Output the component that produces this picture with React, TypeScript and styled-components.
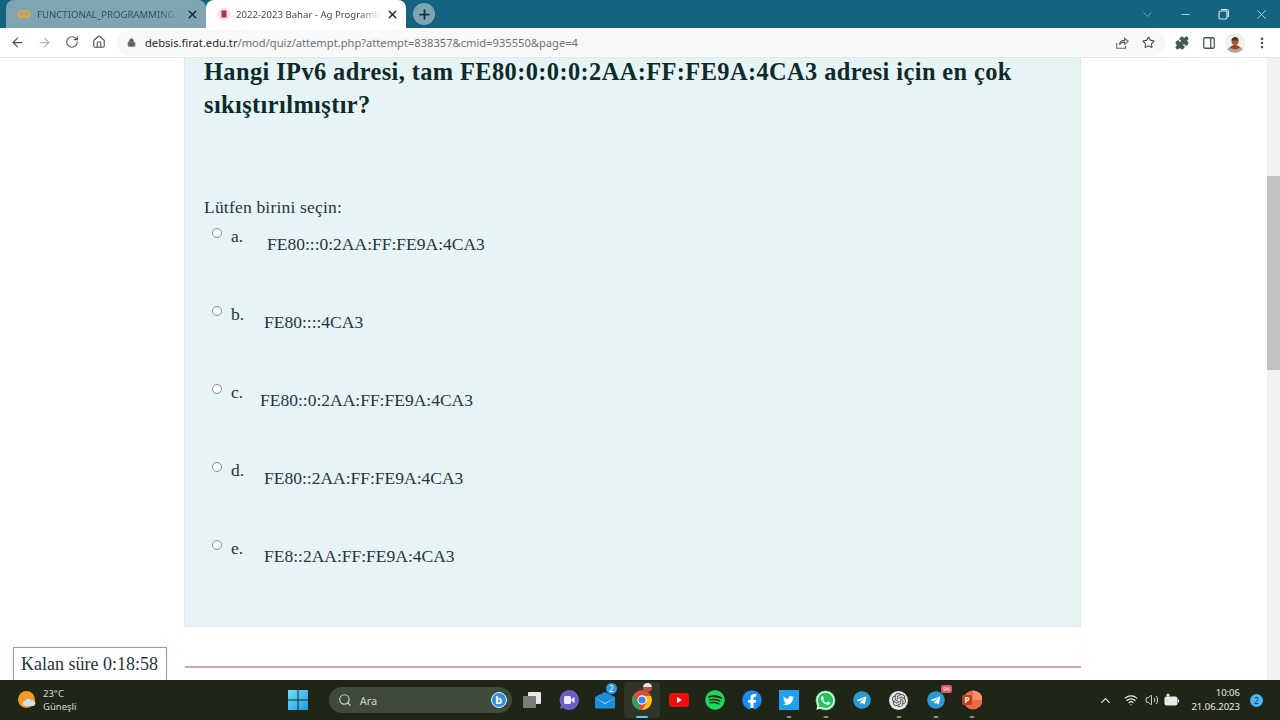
import React from 'react';
import styled, { createGlobalStyle } from 'styled-components';
import {
  ArrowLeft,
  ArrowRight,
  ChevronDown,
  ChevronUp,
  Home,
  Lock,
  Minus,
  MoreVertical,
  PanelRight,
  Plus,
  Puzzle,
  RotateCw,
  Search,
  Star,
  Volume2,
  Wifi,
  X,
} from 'lucide-react';
import { FaFacebook, FaSpotify, FaTelegram, FaTwitter, FaWhatsapp } from 'react-icons/fa';
import { SiOpenai } from 'react-icons/si';

const GlobalStyle = createGlobalStyle`
  html, body {
    margin: 0;
    height: 100%;
    overflow: hidden;
    background: #fff;
  }
`;

const Shell = styled.div`
  width: 1280px;
  height: 720px;
  display: flex;
  flex-direction: column;
  overflow: hidden;
  font-family: 'Noto Sans', 'Open Sans', sans-serif;
`;

const TabStrip = styled.div`
  height: 28px;
  flex: none;
  background: #14637f;
  display: flex;
  align-items: flex-end;
  padding-left: 6px;
`;

const Tab = styled.div<{ $active?: boolean }>`
  width: 200px;
  height: 28px;
  box-sizing: border-box;
  border-radius: 8px 8px 0 0;
  background: ${(p) => (p.$active ? '#fff' : '#7fa5b3')};
  color: ${(p) => (p.$active ? '#45494d' : '#34505c')};
  display: flex;
  align-items: center;
  padding: 0 7px 0 11px;
  font-size: 9.6px;
  gap: 5px;
  white-space: nowrap;
  svg {
    flex: none;
  }
  svg.close {
    color: #17262c;
  }
`;

const TabTitle = styled.span<{ $gap: number }>`
  flex: 1;
  min-width: 0;
  margin-left: ${(p) => p.$gap}px;
  -webkit-mask-image: linear-gradient(90deg, #000 85%, transparent);
  mask-image: linear-gradient(90deg, #000 85%, transparent);
`;

const NewTab = styled.div`
  width: 22px;
  height: 22px;
  border-radius: 50%;
  background: #7fa5b3;
  color: #12303c;
  margin: 0 0 3px 7px;
  display: flex;
  align-items: center;
  justify-content: center;
`;

const WindowControls = styled.div`
  margin-left: auto;
  height: 28px;
  display: flex;
  align-items: center;
  color: #d8e6ec;
`;

const WindowButton = styled.div`
  width: 38px;
  display: flex;
  justify-content: center;
`;

const Toolbar = styled.div`
  height: 30px;
  flex: none;
  background: #fff;
  border-bottom: 1px solid #e3e5e6;
  box-sizing: border-box;
  display: flex;
  align-items: center;
  color: #5c6166;
`;

const NavButton = styled.div<{ $muted?: boolean }>`
  width: 27px;
  display: flex;
  justify-content: center;
  color: ${(p) => (p.$muted ? '#b3b7ba' : '#50555a')};
  flex: none;
`;

const NavGroup = styled.div`
  display: flex;
  padding-left: 4px;
  width: 117px;
  box-sizing: border-box;
  flex: none;
`;

const AddressBar = styled.div`
  width: 1048px;
  height: 26px;
  border-radius: 13px;
  background: #f7f8f8;
  display: flex;
  align-items: center;
  padding: 0 10px;
  box-sizing: border-box;
  flex: none;
  font-size: 11.15px;
  color: #6d7276;
`;

const Host = styled.span`
  color: #24282b;
`;

const Url = styled.span`
  margin-left: 9px;
  flex: 1;
  white-space: nowrap;
`;

const ToolIcons = styled.div`
  display: flex;
  align-items: center;
  flex: none;
  margin-left: 3px;
`;

const AvatarFrame = styled.div`
  width: 20px;
  height: 20px;
  margin: 0 3px;
  border-radius: 50%;
  overflow: hidden;
  background: #f2efec;
`;

const Viewport = styled.div`
  flex: 1;
  min-height: 0;
  display: flex;
`;

const Page = styled.main`
  flex: 1;
  min-width: 0;
  overflow: hidden;
  font-family: 'Liberation Serif', 'DejaVu Serif', serif;
  color: #1d2125;
`;

const QuestionCard = styled.section`
  display: flow-root;
  margin-left: 184px;
  width: 897px;
  height: 569px;
  box-sizing: border-box;
  background: #e7f4f6;
  border: 1px solid #d9ecf0;
  border-top: 0;
  padding: 0 19px;
`;

const QuestionText = styled.h2`
  margin: -3px 0 0;
  font-size: 24.4px;
  letter-spacing: 0.4px;
  line-height: 33px;
  font-weight: 700;
  color: #0f2a2a;
`;

const Prompt = styled.p`
  margin: 74px 0 0;
  font-size: 17.5px;
  letter-spacing: 0.2px;
  line-height: 24px;
  color: #29333a;
`;

const OptionList = styled.div`
  display: flex;
  flex-direction: column;
  margin-top: 6px;
`;

const OptionRow = styled.label`
  height: 78px;
  display: flex;
  align-items: flex-start;
  padding-left: 8px;
  font-size: 17.5px;
  color: #29333a;
`;

const Radio = styled.span`
  width: 10px;
  height: 10px;
  margin-top: 3px;
  flex: none;
  box-sizing: border-box;
  border: 1px solid #8a8a8a;
  border-radius: 50%;
  background: #fff;
`;

const OptionLetter = styled.span`
  margin: 2px 0 0 9px;
  line-height: 18px;
`;

const OptionText = styled.span<{ $left: number }>`
  position: absolute;
  left: ${(p) => p.$left}px;
  margin-top: 7px;
  line-height: 24px;
`;

const TimerRow = styled.div`
  display: flex;
  align-items: center;
  margin: 20px 0 0 13px;
`;

const TimerBox = styled.div`
  width: 154px;
  height: 40px;
  box-sizing: border-box;
  border: 1px solid #d0808f;
  padding: 3px 0 0 7px;
  font-size: 18px;
  line-height: 26px;
  color: #29333a;
  white-space: nowrap;
`;

const TimerRule = styled.div`
  margin: -1px 0 0 18px;
  width: 896px;
  height: 2px;
  background: #dba3b0;
`;

const ScrollTrack = styled.div`
  width: 13px;
  flex: none;
  background: #f1f1f1;
  position: relative;
`;

const ScrollThumb = styled.div`
  position: absolute;
  top: 118px;
  left: 0;
  width: 13px;
  height: 194px;
  background: #c1c1c1;
`;

const Taskbar = styled.footer`
  height: 40px;
  flex: none;
  background: #1f2618;
  display: flex;
  align-items: center;
  color: #e7e9e4;
`;

const Weather = styled.div`
  width: 280px;
  flex: none;
  display: flex;
  align-items: center;
  padding-left: 18px;
  box-sizing: border-box;
  gap: 7px;
  font-size: 9.5px;
  line-height: 13px;
`;

const WeatherText = styled.div`
  color: #d9dcd5;
`;

const Slot = styled.div<{ $active?: boolean; $open?: boolean }>`
  width: 36.7px;
  height: 36px;
  flex: none;
  display: flex;
  align-items: center;
  justify-content: center;
  position: relative;
  border-radius: 4px;
  background: ${(p) => (p.$active ? '#2f3629' : 'transparent')};
  &::after {
    content: '';
    display: ${(p) => (p.$open || p.$active ? 'block' : 'none')};
    position: absolute;
    bottom: 0;
    left: 50%;
    transform: translateX(-50%);
    width: ${(p) => (p.$active ? 12 : 5)}px;
    height: 2px;
    border-radius: 1px;
    background: ${(p) => (p.$active ? '#5fc5f5' : '#8b8f87')};
  }
`;

const SearchPill = styled.div`
  width: 183px;
  height: 26px;
  margin: 0 2px 0 12px;
  flex: none;
  border-radius: 13px;
  background: #3f4a39;
  display: flex;
  align-items: center;
  padding: 0 5px 0 9px;
  box-sizing: border-box;
  font-size: 11px;
  color: #cfd3cb;
  gap: 8px;
`;

const BingBadge = styled.div`
  margin-left: auto;
  width: 16px;
  height: 16px;
  border-radius: 50%;
  background: #2f8fe0;
  border: 1px solid #e8f3fb;
  box-sizing: border-box;
  color: #fff;
  font-weight: 700;
  font-size: 11px;
  line-height: 13px;
  text-align: center;
`;

const CountBadge = styled.span<{ $red?: boolean }>`
  position: absolute;
  top: ${(p) => (p.$red ? 3 : 1)}px;
  right: ${(p) => (p.$red ? 2 : 7)}px;
  min-width: 11px;
  height: ${(p) => (p.$red ? 8 : 11)}px;
  border-radius: ${(p) => (p.$red ? 2 : 6)}px;
  background: ${(p) => (p.$red ? '#e5555f' : '#2b9ae0')};
  color: #fff;
  font-size: ${(p) => (p.$red ? 6 : 8)}px;
  line-height: ${(p) => (p.$red ? 8 : 11)}px;
  text-align: center;
`;

const ProfileDot = styled.span`
  position: absolute;
  top: 1px;
  right: 8px;
  width: 9px;
  height: 9px;
  border-radius: 50%;
  background: linear-gradient(180deg, #f0e6dc 0 40%, #b5573c 40%);
`;

const WhiteCore = styled.span`
  display: flex;
  border-radius: 50%;
  background: radial-gradient(circle, #fff 0 55%, transparent 58%);
`;

const WhatsappCore = styled(WhiteCore)`
  background: radial-gradient(circle, #25c35f 0 66%, transparent 69%);
`;

const TwitterTile = styled.span`
  width: 20px;
  height: 20px;
  background: #1da1f2;
  display: flex;
  align-items: center;
  justify-content: center;
`;

const OpenAiDisc = styled.span`
  width: 19px;
  height: 19px;
  border-radius: 50%;
  background: #e6e6e6;
  display: flex;
  align-items: center;
  justify-content: center;
`;

const Tray = styled.div`
  margin-left: auto;
  display: flex;
  align-items: center;
  color: #e8eae5;
`;

const TrayIcon = styled.div<{ $w: number }>`
  width: ${(p) => p.$w}px;
  display: flex;
  justify-content: center;
`;

const Clock = styled.div`
  width: 52px;
  margin-left: 6px;
  text-align: right;
  font-size: 9.5px;
  line-height: 14px;
  white-space: nowrap;
`;

const NotifyBadge = styled.div`
  width: 13px;
  height: 13px;
  margin: 0 17px 0 10px;
  border-radius: 50%;
  background: #4fb3f0;
  color: #12303c;
  font-size: 8px;
  line-height: 13px;
  text-align: center;
`;

const options = [
  { letter: 'a.', text: 'FE80:::0:2AA:FF:FE9A:4CA3', left: 267 },
  { letter: 'b.', text: 'FE80::::4CA3', left: 264 },
  { letter: 'c.', text: 'FE80::0:2AA:FF:FE9A:4CA3', left: 260 },
  { letter: 'd.', text: 'FE80::2AA:FF:FE9A:4CA3', left: 264 },
  { letter: 'e.', text: 'FE8::2AA:FF:FE9A:4CA3', left: 264 },
];

const WinLogo = () => (
  <svg width="20" height="20" viewBox="0 0 20 20">
    <defs>
      <linearGradient id="win" x1="0" y1="0" x2="1" y2="1">
        <stop offset="0" stopColor="#6fdcfb" />
        <stop offset="1" stopColor="#1a9fe8" />
      </linearGradient>
    </defs>
    <path fill="url(#win)" d="M0 0h9.500v9.500H0zM10.500 0H20v9.500h-9.500zM0 10.500h9.500V20H0zM10.500 10.500H20V20h-9.500z" />
  </svg>
);

const ChromeLogo = () => (
  <svg width="20" height="20" viewBox="0 0 20 20">
    <circle cx="10" cy="10" r="10" fill="#e5483c" />
    <path d="M10 20A10 10 0 0 1 1.300 5L6 12.500l3 7.500z" fill="#2ea550" />
    <path d="M10 6h9a10 10 0 0 1-9 14l4.500-7z" fill="#f9c515" />
    <circle cx="10" cy="10" r="4.700" fill="#fff" />
    <circle cx="10" cy="10" r="3.600" fill="#3c84e8" />
  </svg>
);

const WeatherIcon = () => (
  <svg width="18" height="18" viewBox="0 0 18 18">
    <circle cx="8.500" cy="8.500" r="8.500" fill="#f39a1f" />
    <path d="M7 15a2.500 2.500 0 0 1 .3-5 3 3 0 0 1 5.700-.5A2.800 2.800 0 0 1 15.500 15z" fill="#cfe0f2" />
  </svg>
);

const TaskViewIcon = () => (
  <svg width="20" height="18" viewBox="0 0 20 18">
    <rect x="6" y="1" width="13" height="12" rx="1" fill="#e6e6e6" />
    <rect x="1" y="5" width="13" height="12" rx="1" fill="#7b7b7b" />
  </svg>
);

const MeetIcon = () => (
  <svg width="20" height="20" viewBox="0 0 20 20">
    <path d="M10 0a10 10 0 1 1-6 18l-3 1 1-4A10 10 0 0 1 10 0z" fill="#6b5fc4" />
    <rect x="5" y="6" width="7" height="8" rx="1.500" fill="#f1effa" />
    <path d="M12.500 9l3-2v6l-3-2z" fill="#f1effa" />
  </svg>
);

const MailIcon = () => (
  <svg width="22" height="18" viewBox="0 0 22 18">
    <path d="M1 6l10-5 10 5v10a1.500 1.500 0 0 1-1.500 1.500h-17A1.500 1.500 0 0 1 1 16z" fill="#1c8fdc" />
    <path d="M1 7l10 5 10-5-10 6z" fill="#bfe6fb" />
  </svg>
);

const YoutubeIcon = () => (
  <svg width="20" height="14" viewBox="0 0 20 14">
    <rect width="20" height="14" rx="3" fill="#f00d0d" />
    <path d="M8 4l5 3-5 3z" fill="#fff" />
  </svg>
);

const PowerPointIcon = () => (
  <svg width="20" height="20" viewBox="0 0 20 20">
    <circle cx="11" cy="10" r="9.500" fill="#ed6c47" />
    <path d="M11 .5a9.500 9.500 0 0 1 9.500 9.500H11z" fill="#ff8f6b" />
    <rect x="0" y="5" width="10" height="10" rx="1.500" fill="#c43e1c" />
    <text x="5" y="13" fontSize="8" fontWeight="700" fill="#fff" textAnchor="middle" fontFamily="Noto Sans, sans-serif">
      P
    </text>
  </svg>
);

const BatteryIcon = () => (
  <svg width="16" height="14" viewBox="0 0 16 14" fill="none" stroke="#e8eae5" strokeWidth="1.100">
    <rect x="1" y="4" width="12" height="8" rx="1.500" fill="#e8eae5" />
    <path d="M14.500 6.500v3" />
    <path d="M4 4V1.500M2.500 2.500L4 1l1.500 1.500" />
  </svg>
);

const ShareIcon = () => (
  <svg width="14" height="14" viewBox="0 0 16 16" fill="none" stroke="#5c6166" strokeWidth="1.200" style={{ marginRight: 13 }}>
    <path d="M2 8v6h10v-3" />
    <path d="M5 10c.5-3.500 3-5 6-5V2.500L15 6l-4 3.500V7c-2.500 0-4.500 1-6 3z" />
  </svg>
);

const RestoreIcon = () => (
  <svg width="11" height="11" viewBox="0 0 11 11" fill="none" stroke="#d8e6ec" strokeWidth="1.200">
    <rect x="1" y="2" width="8" height="8" rx="1.500" />
    <path d="M3 .7h5.500a2 2 0 0 1 2 2V8" />
  </svg>
);

const AvatarImage = () => (
  <svg width="20" height="20" viewBox="0 0 20 20">
    <path d="M1 20c0-5 4-7 9-7s9 2 9 7z" fill="#b9a793" />
    <path d="M5 15c1-2 2-3 5-3s4 1 5 3l-5 1.500z" fill="#9c3f2a" />
    <circle cx="10" cy="8.500" r="3.500" fill="#a3593c" />
    <path d="M6.500 7.500c0-2 1.500-3.500 3.500-3.500s3.500 1.500 3.500 3.500z" fill="#4a3528" />
  </svg>
);

export default function App() {
  return (
    <>
      <GlobalStyle />
      <Shell>
        <TabStrip>
          <Tab>
            <svg width="14" height="14" viewBox="0 0 14 14" fill="none" stroke="#e8a33a" strokeWidth="2">
              <circle cx="4.500" cy="7" r="3" />
              <circle cx="9.500" cy="7" r="3" />
            </svg>
            <TabTitle $gap={1}>FUNCTIONAL_PROGRAMMING.ip</TabTitle>
            <X className="close" size={13} strokeWidth={2.5} />
          </Tab>
          <Tab $active>
            <svg width="14" height="14" viewBox="0 0 14 14">
              <circle cx="7" cy="7" r="6.500" fill="#f5dfe4" />
              <rect x="4.500" y="3.500" width="5" height="7" fill="#9b3a52" />
            </svg>
            <TabTitle $gap={0}>2022-2023 Bahar - Ag Programla</TabTitle>
            <X className="close" size={13} strokeWidth={2.5} />
          </Tab>
          <NewTab>
            <Plus size={15} strokeWidth={2.8} />
          </NewTab>
          <WindowControls>
            <WindowButton>
              <ChevronDown size={15} strokeWidth={1.3} color="#8fb4c4" />
            </WindowButton>
            <WindowButton>
              <Minus size={13} strokeWidth={1.5} />
            </WindowButton>
            <WindowButton>
              <RestoreIcon />
            </WindowButton>
            <WindowButton>
              <X size={15} strokeWidth={1.3} />
            </WindowButton>
          </WindowControls>
        </TabStrip>

        <Toolbar>
          <NavGroup>
            <NavButton>
              <ArrowLeft size={15} strokeWidth={2} />
            </NavButton>
            <NavButton $muted>
              <ArrowRight size={15} strokeWidth={2} />
            </NavButton>
            <NavButton>
              <RotateCw size={14} strokeWidth={2} />
            </NavButton>
            <NavButton>
              <Home size={14} strokeWidth={2} />
            </NavButton>
          </NavGroup>
          <AddressBar>
            <Lock size={9} fill="#5c6166" strokeWidth={2.5} />
            <Url>
              <Host>debsis.firat.edu.tr</Host>/mod/quiz/attempt.php?attempt=838357&amp;cmid=935550&amp;page=4
            </Url>
            <ShareIcon />
            <Star size={13} strokeWidth={2} color="#45494d" />
          </AddressBar>
          <ToolIcons>
            <NavButton>
              <Puzzle size={14} fill="#45595c" color="#45595c" />
            </NavButton>
            <NavButton>
              <PanelRight size={14} strokeWidth={2.2} color="#45595c" />
            </NavButton>
            <AvatarFrame>
              <AvatarImage />
            </AvatarFrame>
            <NavButton>
              <MoreVertical size={14} strokeWidth={2.5} color="#45595c" />
            </NavButton>
          </ToolIcons>
        </Toolbar>

        <Viewport>
          <Page>
            <QuestionCard>
              <QuestionText>
                Hangi IPv6 adresi, tam FE80:0:0:0:2AA:FF:FE9A:4CA3 adresi için en çok sıkıştırılmıştır?
              </QuestionText>
              <Prompt>Lütfen birini seçin:</Prompt>
              <OptionList>
                {options.map((o) => (
                  <OptionRow key={o.letter}>
                    <Radio />
                    <OptionLetter>{o.letter}</OptionLetter>
                    <OptionText $left={o.left}>{o.text}</OptionText>
                  </OptionRow>
                ))}
              </OptionList>
            </QuestionCard>
            <TimerRow>
              <TimerBox>Kalan süre 0:18:58</TimerBox>
              <TimerRule />
            </TimerRow>
          </Page>
          <ScrollTrack>
            <ScrollThumb />
          </ScrollTrack>
        </Viewport>

        <Taskbar>
          <Weather>
            <WeatherIcon />
            <WeatherText>
              23°C
              <br />
              Güneşli
            </WeatherText>
          </Weather>
          <Slot>
            <WinLogo />
          </Slot>
          <SearchPill>
            <Search size={14} strokeWidth={2} />
            Ara
            <BingBadge>b</BingBadge>
          </SearchPill>
          <Slot>
            <TaskViewIcon />
          </Slot>
          <Slot>
            <MeetIcon />
          </Slot>
          <Slot>
            <MailIcon />
            <CountBadge>2</CountBadge>
          </Slot>
          <Slot $active>
            <ChromeLogo />
            <ProfileDot />
          </Slot>
          <Slot>
            <YoutubeIcon />
          </Slot>
          <Slot>
            <FaSpotify size={20} color="#1ed760" />
          </Slot>
          <Slot>
            <WhiteCore>
              <FaFacebook size={20} color="#1b8cf0" />
            </WhiteCore>
          </Slot>
          <Slot $open>
            <TwitterTile>
              <FaTwitter size={11} color="#fff" />
            </TwitterTile>
          </Slot>
          <Slot $open>
            <WhatsappCore>
              <FaWhatsapp size={21} color="#f2f8f2" />
            </WhatsappCore>
          </Slot>
          <Slot>
            <WhiteCore>
              <FaTelegram size={18} color="#2a9bd8" />
            </WhiteCore>
          </Slot>
          <Slot $open>
            <OpenAiDisc>
              <SiOpenai size={14} color="#4a4a4a" />
            </OpenAiDisc>
          </Slot>
          <Slot $open>
            <WhiteCore>
              <FaTelegram size={18} color="#2a9bd8" />
            </WhiteCore>
            <CountBadge $red>96</CountBadge>
          </Slot>
          <Slot $open>
            <PowerPointIcon />
          </Slot>
          <Tray>
            <TrayIcon $w={30}>
              <ChevronUp size={15} strokeWidth={2} />
            </TrayIcon>
            <TrayIcon $w={22}>
              <Wifi size={14} strokeWidth={2} />
            </TrayIcon>
            <TrayIcon $w={20}>
              <Volume2 size={14} strokeWidth={1.6} />
            </TrayIcon>
            <TrayIcon $w={20}>
              <BatteryIcon />
            </TrayIcon>
            <Clock>
              10:06
              <br />
              21.06.2023
            </Clock>
            <NotifyBadge>2</NotifyBadge>
          </Tray>
        </Taskbar>
      </Shell>
    </>
  );
}
